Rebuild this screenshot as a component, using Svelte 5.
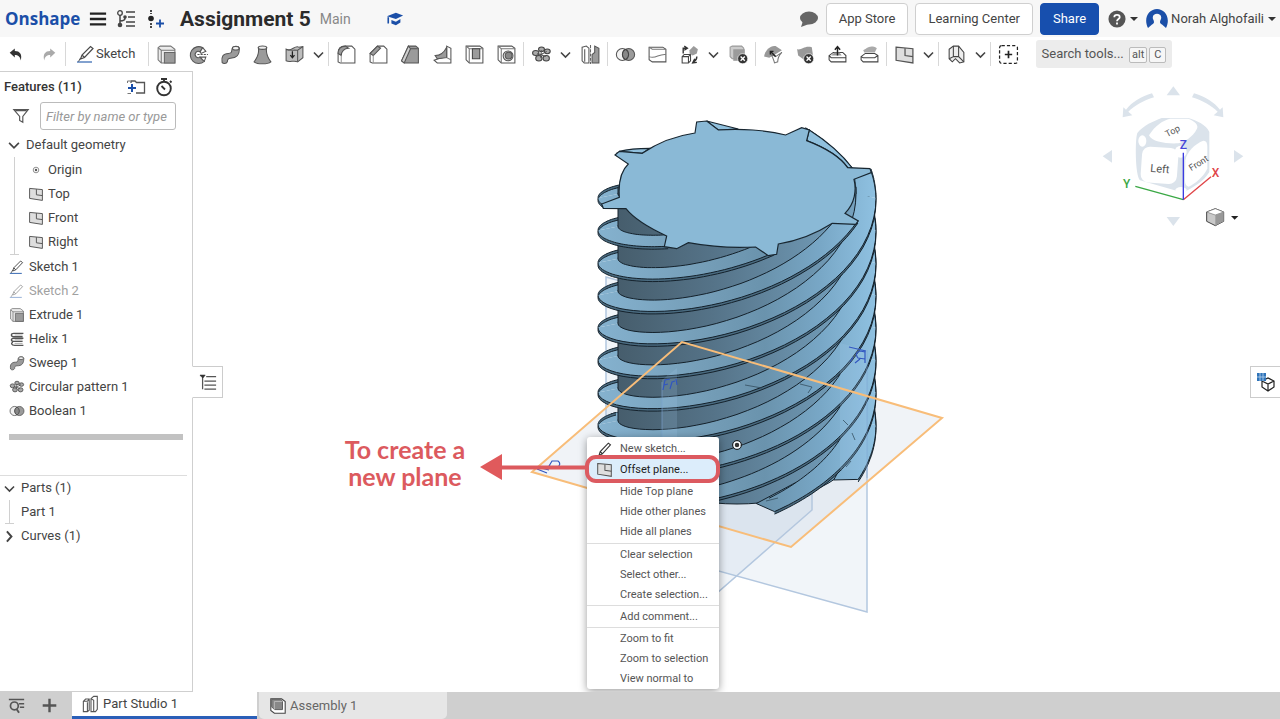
<script>
  const g = '#9b9b9b', d = '#4a4a4a';
  const icons = {
    undo: `<path d="M2 8 L8 3 V6 C14 6 17 10 15 17 C14 12 12 10.500 8 10.500 V13.500 Z" fill="#333"/>`,
    redo: `<path d="M18 8 L12 3 V6 C6 6 3 10 5 17 C6 12 8 10.500 12 10.500 V13.500 Z" fill="#aaa"/>`,
    sketch: `<path d="M4.500 15 L6 11 L14.500 2.500 L17 4.500 L8.500 13.500 Z M6 11 L8.500 13.500" fill="#fff" stroke="${d}" stroke-width="1.200"/><path d="M1 18 H16" stroke="#3f6fb5" stroke-width="1.300"/><path d="M2.500 17.500 L4.500 14" stroke="${d}"/>`,
    pencil: `<path d="M3.500 17 L5 12.500 L14.500 2.500 L17 4.500 L7.500 15 Z M5 12.500 L7.500 15" fill="#fff" stroke="#333" stroke-width="1.300"/>`,
    extrude: `<path d="M2 3.500 L4 2 H14 L18 5 V18 H5 L2 15 Z" fill="#ececec" stroke="#777"/><path d="M5 18 V6 L2 3.500 M5 6 H18" stroke="#777" fill="none"/><path d="M8 8 H18 V18 H8 Z" fill="${g}" stroke="#666"/>`,
    revolve: `<path d="M14 3.500 A8 8 0 1 0 15.500 16.500 L11.500 12.500 A3 3 0 1 1 11.500 7.500 Z" fill="${g}" stroke="#555"/><path d="M14 3.500 L17 7 L12.500 9 L11.500 7.500 Z M11.500 12.500 L17 12.500 L15.500 16.500 Z" fill="#fff" stroke="#555"/><path d="M9 10 H19" stroke="#555" stroke-dasharray="2 1"/>`,
    sweep: `<path d="M2 17.500 C1 12 3 9 8 9 C11 9 11 8 11.500 4.500 C12.500 1.500 17.500 1.500 18.500 4 C18.500 11 16 13.500 10 13.500 C7.500 13.500 7 15 7 17 C6 19 3 19 2 17.500 Z" fill="${g}" stroke="#555"/><ellipse cx="15" cy="4" rx="3.200" ry="1.700" fill="#f3f3f3" stroke="#555"/>`,
    loft: `<path d="M6 3.500 C7 8 5 13 2 17 C5 19.500 15 19.500 18 17 C15 13 13 8 14 3.500 Z" fill="${g}" stroke="#555"/><ellipse cx="10" cy="3.500" rx="4" ry="1.600" fill="#eee" stroke="#555"/>`,
    thicken: `<path d="M2 5 C7 8 10 1 14 3 L18 2.500 V13 L13 17 C9 15 6 18 2 16 Z" fill="#bdbdbd" stroke="#555"/><path d="M2 5 C6 6.500 9 5.500 13 6 L18 2.500 M13 6 V17" fill="none" stroke="#555"/><path d="M8 7 V12 M6 10.500 L8 13 L10 10.500" fill="none" stroke="#222" stroke-width="1.200"/>`,
    fillet: `<path d="M2 17 V9 C2 4 5 2 9 2 H15 L18 5 V18 H4 Z" fill="#fff" stroke="#555"/><path d="M2 9 C2 4 5 2 9 2 L12 4 C8 4 5 7 5 11 Z" fill="${g}" stroke="#555"/><path d="M5 11 V18" stroke="#999"/>`,
    chamfer: `<path d="M2 17 V9 L9 2 H15 L18 5 V18 H4 Z" fill="#fff" stroke="#555"/><path d="M2 9 L9 2 L12 4 L5 11 Z" fill="${g}" stroke="#555"/><path d="M5 11 V18" stroke="#999"/>`,
    draft: `<path d="M8 2 H15 L17.500 4 V18 H4 L1.500 16 Z" fill="${g}" stroke="#555"/><path d="M8 2 L10 4.500 L4 18 L1.500 16 Z" fill="#d0d0d0" stroke="#555"/><path d="M10 4.500 H17" stroke="#555"/>`,
    rib: `<path d="M14 2 L18 4 V18 H5 L2 15.500 L6 14 L14 12 Z" fill="#fff" stroke="#555"/><path d="M14 3 V13 L5 14 L3 11 C9 11 12 7 14 3 Z" fill="${g}" stroke="#555"/><path d="M14 13 L18 15" stroke="#777"/>`,
    shell: `<path d="M2 2 H15 L18 4 V18 H5 L2 15 Z" fill="#fff" stroke="#555"/><path d="M5 4.500 V18 M2 2 L5 4.500 H18" stroke="#777" fill="none"/><path d="M8 4.500 H15 V14 H8 Z" fill="${g}" stroke="#444"/>`,
    hole: `<path d="M2 2 H15 L18 4 V18 H5 L2 15 Z" fill="#fff" stroke="#555"/><path d="M5 4.500 V18 M2 2 L5 4.500 H18" stroke="#777" fill="none"/><circle cx="11.500" cy="11.300" r="4.700" fill="#ddd" stroke="#555"/><circle cx="12" cy="11" r="3.200" fill="#888" stroke="#555"/>`,
    pattern: `<g fill="#aaa" stroke="#444"><ellipse cx="4.500" cy="8.500" rx="3" ry="2.400"/><ellipse cx="10" cy="5" rx="2.800" ry="2.200"/><ellipse cx="15.500" cy="7" rx="2.800" ry="2.200"/><ellipse cx="7.500" cy="13.500" rx="3" ry="2.600"/><ellipse cx="14.500" cy="13.500" rx="3" ry="2.600"/></g><path d="M6 9 L14 12 M10 6 L9 13 M15 7 L8 11" stroke="#555"/>`,
    mirror: `<path d="M2 3 L6 2 L8.500 4 V18 H4 L2 16 Z M4.500 5 V17" fill="#fff" stroke="#555"/><path d="M11.500 18 V10 L14 8 V2 L18 4 V18 Z" fill="${g}" stroke="#555"/><path d="M10 1 V19" stroke="#666" stroke-dasharray="3 1"/>`,
    boolean: `<circle cx="7" cy="10" r="5.700" fill="#f2f2f2" stroke="#555"/><circle cx="13" cy="10" r="5.700" fill="${g}" stroke="#555"/><path d="M10 5 A5.700 5.700 0 0 1 10 15 A5.700 5.700 0 0 1 10 5" fill="#888" stroke="#444"/>`,
    split: `<path d="M2 3 H15 L18 5 V17 H5 L2 15 Z" fill="#fff" stroke="#555"/><path d="M2 3 L5 5 H18 M2 12 C8 15 11 9 18 10" fill="none" stroke="#777"/>`,
    transform: `<path d="M3 12 L5 10 H11 V16 L9 18 H3 Z M3 12 H9 V18 M9 12 L11 10" fill="#fff" stroke="#444"/><path d="M10 6 L14 2 L18 5 L17 9 L13 11 L10 9 Z" fill="${g}"/><path d="M4 9 V4 H7 M5 2 L8 4 L5 6 M17 12 C17 15 16 16 14 17 M15 14 L13 18 L17 17.500" stroke="#333" fill="none" stroke-width="1.300"/>`,
    del: `<path d="M2 3 L4 2 H13 L15 4 V14 H4 L2 12 Z" fill="#ccc" stroke="#999"/><path d="M5 5 H16 V16 H5 Z" fill="${g}"/><circle cx="14" cy="14" r="4.800" fill="#333" stroke="#fff" stroke-width=".6"/><path d="M12 12 L16 16 M16 12 L12 16" stroke="#fff" stroke-width="1.300"/>`,
    face: `<path d="M1 12 C2 5 8 1 12 2 L18 6 L13 9 L6 13 Z" fill="#999"/><path d="M7 9 L12 12 L18 8 C15 11 14 14 14 17 L11 18 C10 15 10 13 7 9" fill="#fff" stroke="#777"/><path d="M12 12 L7 7 M7 10 V7 H10" stroke="#222" fill="none" stroke-width="1.300"/>`,
    delface: `<path d="M2 5 C7 6 9 1 16 3 L17 10 L10 16 L3 11 Z" fill="#999"/><circle cx="13" cy="14" r="4.800" fill="#333" stroke="#fff" stroke-width=".6"/><path d="M11 12 L15 16 M15 12 L11 16" stroke="#fff" stroke-width="1.300"/>`,
    moveface: `<path d="M2 11 L6 8 H15 L18 11 V17 H4 L2 15 Z M2 11 L4 13 H18" fill="#fff" stroke="#444"/><path d="M4 11 H14 L12 8 H7 Z" fill="${g}"/><path d="M10 11 V3 M7.500 5.500 L10 2.500 L12.500 5.500" fill="none" stroke="#222" stroke-width="1.400"/>`,
    replace: `<path d="M4 6 C7 5 10 0 17 4 L15 8 H5 Z" fill="#aaa"/><path d="M2 12 L6 9 H15 L18 11 V17 H4 L2 15 Z M2 12 L4 13 H15 L18 11" fill="#fff" stroke="#444"/>`,
    plane: `<path d="M2 3 L18 4.500 V18 L2 15.500 Z" fill="#dedede" stroke="#555" stroke-width="1.200"/><path d="M10.500 4 V11 L18 12" fill="none" stroke="#555" stroke-width="1.200"/>`,
    frame: `<path d="M3 5 L7 2 H12 L17 8 V17 L13 18 L9 14 L6 17 L3 14 Z" fill="#eee" stroke="#444"/><path d="M7 2 V12 L3 14 M7 12 H12 L17 17 M12 2 V12" fill="none" stroke="#444"/>`,
    addtool: `<rect x="1.500" y="1.500" width="17" height="17" rx="2" fill="none" stroke="#222" stroke-width="1.200" stroke-dasharray="3 2"/><path d="M10 6.500 V13.500 M6.500 10 H13.500" stroke="#222" stroke-width="1.600"/>`,
    helix: `<path d="M18 3 H6 C2 3 2 7 6 7 H17 M18 9 H6 C2 9 2 13 6 13 H17 M5 14 C2 15 3 18 7 18 H18" fill="none" stroke="#555" stroke-width="1.700"/><path d="M17 5 H7 M17 11 H7 M17 15.500 H7" stroke="#999"/>`,
    menu: `<path d="M1 4 H19 M1 10 H19 M1 16 H19" stroke="#222" stroke-width="2.600"/>`,
    tree: `<circle cx="4" cy="4" r="2.300" fill="none" stroke="#444" stroke-width="1.300"/><circle cx="4" cy="16" r="2.300" fill="#444"/><circle cx="9" cy="8" r="1.800" fill="#444"/><path d="M4 6 V14 M4 12 C8 12 9 11 9 9 M10 3 H19 M12 8 H19 M10 13 H19 M10 17 H19" fill="none" stroke="#444" stroke-width="1.500"/>`,
    history: `<path d="M6 1 V5 M6 14 V19" stroke="#333" stroke-width="1.800" stroke-dasharray="2 1"/><circle cx="6" cy="9.500" r="2.800" fill="#222"/><path d="M11 14.500 H19 M15 10.500 V18.500" stroke="#1b4fa8" stroke-width="1.800"/>`,
    cap: `<path d="M1 7 L11 3 L19 6 L11 10 Z M6 11 L11 13 L16 10 V14 L11 17 L6 15 Z" fill="#1b4fa8"/><path d="M2.500 8 V15" stroke="#1b4fa8" stroke-width="1.800"/>`,
    comment: `<ellipse cx="10" cy="9" rx="9" ry="6.500" fill="#666"/><path d="M4 12 L2 18 L10 15 Z" fill="#666"/>`,
    help: `<circle cx="10" cy="10" r="9.500" fill="#555"/><path d="M7 8 C7 4.500 13 4.500 13 8 C13 10 10 10 10 12.500 M10 14 V16" stroke="#fff" stroke-width="2" fill="none"/>`,
    folder: `<path d="M5 6 V4 H9 L10.500 5.500 H18.500 V16 H10" fill="none" stroke="#555" stroke-width="1.300"/><path d="M2 11 H10 M6 7 V15" stroke="#1b4fa8" stroke-width="2"/><path d="M1.500 6 V4 H4 M1.500 16.500 H5" stroke="#777"/>`,
    clock: `<circle cx="10" cy="11.500" r="6.800" fill="#fff" stroke="#333" stroke-width="1.900"/><path d="M7 2 H13 M10 2 V5 M16 4 L17.500 5.500 M7.500 9 L11 12.500" stroke="#333" stroke-width="1.800"/>`,
    filter: `<path d="M2 3 H18 L12 10.500 V17 L8.500 15 V10.500 Z M4 4 H16" fill="#fff" stroke="#555" stroke-width="1.300"/>`,
    origin: `<circle cx="10" cy="10" r="3.500" fill="none" stroke="#777"/><circle cx="10" cy="10" r="1.500" fill="#555"/>`,
    down: `<path d="M3 7 L10 14 L17 7" fill="none" stroke="#444" stroke-width="2.400"/>`,
    right: `<path d="M6 2 L13 10 L6 18" fill="none" stroke="#444" stroke-width="3"/>`,
    list: `<path d="M1 3 H6 L4 5.500 V18 M8 4 H19 M6 9 H19 M6 13.500 H19 M6 18 H19" stroke="#555" fill="none" stroke-width="1.400"/><path d="M1 2 H7 L4 6 Z" fill="#333"/>`,
    cubegrid: `<path d="M6 9 L12 6 L18 9 V15 L12 19 L6 15 Z M6 9 L12 12 L18 9 M12 12 V19" fill="#fff" stroke="#222" stroke-width="1.200"/><rect x="1" y="1" width="9" height="8" fill="#2f73b8"/><path d="M4 1 V9 M7 1 V9 M1 5 H10" stroke="#bcd5ef" stroke-width=".8"/>`,
    find: `<path d="M1 3 H19 M13 8 H19 M14 12 H19" stroke="#555" stroke-width="1.800"/><circle cx="7.500" cy="10.500" r="4.600" fill="none" stroke="#555" stroke-width="2"/><path d="M10 14 L13 18.500" stroke="#555" stroke-width="2.200"/>`,
    plus: `<path d="M10 2 V18 M2 10 H18" stroke="#555" stroke-width="2.800"/>`,
    studio: `<path d="M1.500 7 L4 4.500 H8 V17 L6 18.500 H1.500 Z M6 8 V18 M1.500 7 H6 L8 4.500" fill="#fff" stroke="#555" stroke-width="1.200"/><path d="M10 4 L13 1.500 H17 V16 L15 18.500 H10 Z M10 4 L13 6 V18" fill="#fff" stroke="#555" stroke-width="1.200"/>`,
    assembly: `<path d="M2 2 H14 L18 5 V18 H6 L2 15 Z" fill="#fff" stroke="#444" stroke-width="1.200"/><path d="M3 2.500 H13 L15 4.500 V14 H6 L3 11 Z" fill="#888" stroke="#555"/><path d="M6 5 H15 M6 5 V14" stroke="#bbb"/>`
  };

  const toolGroups = [
    [['extrude', 'Extrude'], ['revolve', 'Revolve'], ['sweep', 'Sweep'], ['loft', 'Loft'], ['thicken', 'Thicken'], ['down', 'More solids']],
    [['fillet', 'Fillet'], ['chamfer', 'Chamfer'], ['draft', 'Draft'], ['rib', 'Rib'], ['shell', 'Shell'], ['hole', 'Hole']],
    [['pattern', 'Circular pattern'], ['down', 'More patterns'], ['mirror', 'Mirror']],
    [['boolean', 'Boolean'], ['split', 'Split'], ['transform', 'Transform'], ['down', 'More transforms'], ['del', 'Delete part']],
    [['face', 'Modify fillet'], ['delface', 'Delete face'], ['moveface', 'Move face'], ['replace', 'Replace face']],
    [['plane', 'Plane'], ['down', 'More planes']],
    [['frame', 'Frame'], ['down', 'More frames']],
    [['addtool', 'Add custom features']]
  ];
  const geometry = [['origin', 'Origin'], ['plane', 'Top'], ['plane', 'Front'], ['plane', 'Right']];
  const features = [
    ['sketch', 'Sketch 1'], ['sketch', 'Sketch 2', true], ['extrude', 'Extrude 1'], ['helix', 'Helix 1'],
    ['sweep', 'Sweep 1'], ['pattern', 'Circular pattern 1'], ['boolean', 'Boolean 1']
  ];
  const menu = [
    [['New sketch...', 'pencil'], ['Offset plane...', 'plane'], ['Hide Top plane'], ['Hide other planes'], ['Hide all planes']],
    [['Clear selection'], ['Select other...'], ['Create selection...']],
    [['Add comment...']],
    [['Zoom to fit'], ['Zoom to selection'], ['View normal to']]
  ];

  // Eight-start thread, projected: an angle runs from the right rim (0) over the front to the left rim (PI).
  const CX = 737, TOP = 187, BOTTOM = 446, RISE = 259 / (2 * Math.PI), TILT = 0.49;
  const OUTER = 139, INNER = 119, PI = Math.PI;
  function point(r, y0, a, dy = 0) {
    return `${(CX + r * Math.cos(a)).toFixed(1)},${(y0 + dy + r * TILT * Math.sin(a) - RISE * (PI - a)).toFixed(1)}`;
  }
  function curve(r, y0, from, to, dy = 0) {
    return Array.from({ length: 37 }, (_, i) => point(r, y0, from + ((to - from) * i) / 36, dy));
  }
  function segment(y0, lo, hi) {
    const end = Math.max(lo, PI - (y0 - TOP) / RISE);
    const foot = PI - (y0 - BOTTOM) / RISE;
    const start = Math.min(hi, foot);
    if (start <= end) return null;
    const out = curve(OUTER, y0, start, end);
    const inner = curve(INNER, y0, end, start, -4);
    const low = curve(OUTER, y0, end, start, 2.5);
    const footInner = [CX + INNER * Math.cos(foot + 0.11), BOTTOM + INNER * TILT * Math.sin(foot + 0.11)].join(',');
    return {
      face: 'M' + out.concat(inner).join(' ') + 'Z',
      rim: 'M' + out.concat(low).join(' ') + 'Z',
      outer: 'M' + out.join(' '),
      inner: 'M' + inner.join(' '),
      low: 'M' + low.join(' '),
      foot: foot < hi && foot > lo ? `M${point(OUTER, y0, foot)} ${footInner} ${point(INNER, y0, foot - 0.25, -4)} ${point(OUTER, y0, foot - 0.08)}Z` : ''
    };
  }
  const starts = Array.from({ length: 17 }, (_, i) => 198 + 32.4 * (15 - i));
  const back = starts.flatMap((y) => [segment(y, PI, PI + 1), segment(y, -1.3, 0)]).filter(Boolean);
  const front = starts.map((y) => segment(y, 0, PI)).filter(Boolean);
</script>

{#snippet icon(name, size = 20)}
  <svg class="icon" width={size} height={size} viewBox="0 0 20 20" fill="none" aria-hidden="true">{@html icons[name]}</svg>
{/snippet}

{#snippet thread(t)}
  {#if t.foot}<path d={t.foot} fill="url(#flank)" stroke="#14212b" />{/if}
  <path d={t.face} fill="url(#flank)" />
  <path d={t.rim} fill="#4a6b80" />
  <path d={t.outer} class="edge" />
  <path d={t.inner} class="edge" />
  <path d={t.low} class="edge" />
{/snippet}

<div class="app">
  <header>
    <a class="logo" href="#home">Onshape</a>
    <button class="bare" aria-label="Menu">{@render icon('menu', 18)}</button>
    <button class="bare" aria-label="Versions">{@render icon('tree')}</button>
    <button class="bare" aria-label="Create version">{@render icon('history')}</button>
    <h1>Assignment 5</h1>
    <span class="branch">Main</span>
    <button class="bare learn" aria-label="Education">{@render icon('cap', 18)}</button>
    <div class="right">
      <button class="bare" aria-label="Comments">{@render icon('comment')}</button>
      <button class="box">App Store</button>
      <button class="box">Learning Center</button>
      <button class="box share">Share</button>
      <button class="bare drop" aria-label="Help">{@render icon('help', 18)}<i class="caret"></i></button>
      <button class="bare user">
        <svg width="24" height="22" viewBox="0 0 24 22" aria-hidden="true"><path d="M3 20 C-2 10 4 1 12 1 C20 1 26 10 21 20 L17 16.500 C14 15 15 13 16 11 C18 4 6 4 8 11 C9 13 10 15 7 16.500 Z" fill="#1b4fa8" /></svg>
        Norah Alghofaili<i class="caret"></i>
      </button>
    </div>
  </header>

  <nav class="toolbar" aria-label="Tools">
    <button class="tool" aria-label="Undo">{@render icon('undo', 17)}</button>
    <button class="tool" aria-label="Redo">{@render icon('redo', 17)}</button>
    <i class="sep"></i>
    <button class="bare sketch">{@render icon('sketch')}Sketch</button>
    {#each toolGroups as group}
      <i class="sep"></i>
      {#each group as [name, label]}
        <button class="tool" class:more={name === 'down'} aria-label={label}>{@render icon(name, name === 'down' ? 13 : 21)}</button>
      {/each}
    {/each}
    <button class="search">Search tools... <kbd>alt</kbd><kbd>C</kbd></button>
  </nav>

  <main>
    <aside>
      <div class="panel-head">
        <h2>Features (11)</h2>
        <button class="bare" aria-label="Add folder">{@render icon('folder')}</button>
        <button class="bare" aria-label="Regeneration times">{@render icon('clock')}</button>
      </div>
      <div class="filter">
        <label for="filter" aria-label="Filter">{@render icon('filter', 18)}</label>
        <input id="filter" type="text" placeholder="Filter by name or type" />
      </div>
      <button class="row group">{@render icon('down', 14)}Default geometry</button>
      <ul class="branchline geometry">
        {#each geometry as [name, label]}
          <li class="row">{@render icon(name, 16)}{label}</li>
        {/each}
      </ul>
      <ul>
        {#each features as [name, label, hidden]}
          <li class="row feature" class:hidden>{@render icon(name, 16)}{label}</li>
        {/each}
      </ul>
      <div class="rollback"></div>
      <section class="parts">
        <button class="row part-group">{@render icon('down', 13)}Parts (1)</button>
        <ul class="branchline part"><li class="row">Part 1</li></ul>
        <button class="row part-group">{@render icon('right', 13)}Curves (1)</button>
      </section>
    </aside>

    <div class="canvas">
      <svg class="scene" viewBox="193 72 1087 620" preserveAspectRatio="xMinYMin meet" aria-label="Threaded part">
        <defs>
          <linearGradient id="flank" gradientUnits="userSpaceOnUse" x1="598" y1="0" x2="876" y2="0">
            <stop offset="0" stop-color="#85b2cf" /><stop offset=".35" stop-color="#769fb9" />
            <stop offset=".6" stop-color="#6a93ad" /><stop offset=".8" stop-color="#78a7c6" /><stop offset="1" stop-color="#8fc1e1" />
          </linearGradient>
          <linearGradient id="core" gradientUnits="userSpaceOnUse" x1="617" y1="0" x2="857" y2="0">
            <stop offset="0" stop-color="#465d6c" /><stop offset=".4" stop-color="#557388" /><stop offset="1" stop-color="#76a2bf" />
          </linearGradient>
        </defs>
        <g fill="#a9c0dc" fill-opacity=".16" stroke="#b3c7df" stroke-width="1.500">
          <path d="M606 277 L867 350 V612 L606 540 Z" />
          <path d="M662 380 L812 250 V510 L662 641 Z" />
        </g>
        <path d="M532 472 L682 342 L942 418 L791 547 Z" fill="#b9c9dc" fill-opacity=".22" />
        {#each back as t}{@render thread(t)}{/each}
        <path d="M618 187 V446 A119 58 0 0 0 856 446 V187 Z" fill="url(#core)" stroke="#16232d" />
        {#each front as t}{@render thread(t)}{/each}
        <g transform="translate(580 100) scale(.3333)" stroke="#182630" stroke-width="3.500">
          <path d="M688 90 C735 120 780 155 817 204 L803 203 C780 170 740 145 680 122 Z M380 63 L475 87 L415 90 Z M118 154 C145 147 175 145 210 145 L187 160 Z" fill="#90c0dd" />
          <path d="M345 99 L350 66 L380 63 L415 90 C480 85 560 90 617 105 L665 83 L688 90 L680 122 C740 145 780 170 803 203 L870 206 L874 218 L822 238 C830 270 825 310 795 340 L835 363 L827 373 L757 370 C710 400 660 422 595 432 L590 463 L565 467 L527 441 C460 445 390 440 325 428 L290 446 L253 440 L260 408 C210 385 165 360 138 326 L70 325 L65 312 L118 292 C115 250 120 215 145 192 L105 165 L118 154 L187 160 C230 130 290 107 345 99 Z" fill="#8ab9d6" />
        </g>
        <path d="M662 380 L677 368 V446 H662 Z M840 343 L867 350 V470 H840 Z" fill="#a9cdf0" fill-opacity=".18" />
        <path d="M662 382 V440 M867 350 V478" stroke="#7ba4d4" stroke-opacity=".6" />
        <path d="M745 385 L762 388 M800 384 L812 387 L808 393 M843 420 L848 425 M852 433 L855 440 M846 467 L851 461 M766 501 L778 498" fill="none" stroke="#2c4554" stroke-opacity=".7" />
        <g stroke="#3156c0" stroke-width="1.200" fill="none">
          <path d="M663 390 L665 380 L670 379 M664 385 L668 384 M670 389 L672 382 L675 381 M676 379 L677 385 M849 347 L866 351 M865 363 V352 L860 351 Q854 353 858 358 L865 359 M860 359 L855 363 M853 357 L850 362" />
          <path d="M537 469 L547 473 M541 468 L549 470 M549 466 L557 468 Q562 464 558 461 L552 461 Z" />
        </g>
        <path d="M532 472 L682 342 L942 418 L791 547 Z" fill="none" stroke="#f8bd79" stroke-width="2" />
        <circle cx="737" cy="445" r="3" fill="#333" stroke="#fff" stroke-width="1.500" /><circle cx="737" cy="445" r="4.500" fill="none" stroke="#222" />
      </svg>

      <svg class="cube" width="200" height="170" viewBox="0 0 600 510" aria-label="View cube">
        <g fill="#dbe3eb">
          <path d="M280 43 L300 70 H260 Z M280 462 L300 435 H260 Z M68 253 L96 234 V272 Z M490 253 L462 234 V272 Z" />
          <path d="M216 64 L222 76 C190 86 162 102 145 119 L157 130 L128 136 L130 106 L138 113 C155 91 185 73 216 64 Z M342 64 L336 76 C368 86 396 102 413 119 L401 130 L430 136 L428 106 L420 113 C403 91 373 73 342 64 Z" />
          <path d="M172 183 C190 160 220 148 245 138 H325 C350 145 380 160 388 180 V300 C370 330 340 345 310 362 L180 325 C165 310 165 200 172 183 Z" />
        </g>
        <g fill="#fff">
          <path d="M207 190 C225 160 250 145 270 140 H325 C345 148 358 160 350 172 C340 195 310 212 295 214 C260 216 215 210 207 190 Z" />
          <rect x="184" y="226" width="109" height="108" rx="24" transform="rotate(4 238 280)" />
          <path d="M316 265 C320 240 345 215 370 206 Q382 205 382 225 V290 C370 315 345 335 326 344 Q315 343 315 325 Z" />
          <ellipse cx="187" cy="207" rx="12" ry="17" /><circle cx="302" cy="239" r="18" /><ellipse cx="303" cy="354" rx="17" ry="9" />
        </g>
        <g class="cube-text">
          <text x="210" y="299" transform="rotate(5 210 299)">Left</text>
          <text class="small" x="334" y="298" transform="rotate(-32 334 298)">Front</text>
          <text class="small" x="262" y="196" transform="rotate(-28 262 196)">Top</text>
        </g>
        <path d="M310 383 L166 343" stroke="#3aa845" stroke-width="4" /><path d="M310 383 L393 314" stroke="#df4548" stroke-width="4" /><path d="M310 383 V242" stroke="#3b3be0" stroke-width="4" />
        <g class="axis"><text x="299" y="232" fill="#4646d8">Z</text><text x="395" y="314" fill="#df4548">X</text><text x="129" y="348" fill="#3aa845">Y</text></g>
        <path d="M380 420 L406 410 L431 420 V448 L406 461 L380 448 Z" fill="#c9c9c9" stroke="#444" stroke-width="3" /><path d="M380 420 L406 429 L431 420 L406 410 Z" fill="#fff" stroke="#777" stroke-width="2" /><path d="M406 429 L431 420 V448 L406 461 Z" fill="#999" /><path d="M453 432 H475 L464 443 Z" fill="#222" />
      </svg>

      <button class="edge-tab left" aria-label="Toggle feature list">{@render icon('list', 18)}</button>
      <button class="edge-tab far" aria-label="Appearance panel">{@render icon('cubegrid')}</button>

      <div class="menu" role="menu">
        {#each menu as section}
          <div class="section">
            {#each section as [label, glyph]}
              <button role="menuitem" class:active={glyph === 'plane'}>
                <span class="slot">{#if glyph}{@render icon(glyph, 17)}{/if}</span>{label}
              </button>
            {/each}
          </div>
        {/each}
      </div>

      <p class="note">To create a<br />new plane</p>
      <svg class="arrow" width="110" height="28" viewBox="0 0 110 28" aria-hidden="true"><path d="M0 14 L22 1 V27 Z" fill="#e05a5c" /><path d="M20 14.500 H107" stroke="#dc5a5e" stroke-width="4" /></svg>
      <div class="ring"></div>
    </div>
  </main>

  <footer>
    <button class="bare find" aria-label="Search tabs">{@render icon('find', 17)}</button>
    <button class="bare add" aria-label="Add tab">{@render icon('plus', 17)}</button>
    <button class="tab current">{@render icon('studio', 18)}Part Studio 1</button>
    <button class="tab">{@render icon('assembly', 18)}Assembly 1</button>
  </footer>
</div>

<style>
  :global(body) { margin: 0; }
  .app { display: flex; flex-direction: column; height: 100vh; overflow: hidden; background: #fff; color: #444; font: 13px/16px Roboto, sans-serif; }
  .app * { box-sizing: border-box; }
  button { font: inherit; color: inherit; margin: 0; padding: 0; border: 0; background: none; white-space: nowrap; }
  h1, h2, p, ul { margin: 0; padding: 0; }
  ul { list-style: none; }
  .icon { display: block; flex: none; }
  .bare { display: flex; align-items: center; }
  .caret { border: 4px solid transparent; border-top-color: #333; border-bottom: 0; margin-left: 4px; }

  header { flex: none; display: flex; align-items: center; height: 37px; padding: 0 4px 0 5px; background: #f7f7f7; gap: 9px; }
  .logo { width: 75px; color: #1b4fa8; font: 700 17px/24px "Open Sans", sans-serif; text-decoration: none; }
  h1 { font: 700 21px/26px Roboto, sans-serif; color: #2b2b2b; margin-left: 6px; white-space: nowrap; }
  .branch { font-size: 14px; color: #888; }
  .learn { margin-left: 26px; }
  .right { display: flex; align-items: center; margin-left: auto; gap: 7px; }
  .box { height: 32px; padding: 0 12px; border: 1px solid #cfcfcf; border-radius: 4px; background: #fff; }
  .share { background: #174fae; border-color: #174fae; color: #fff; }
  .drop { margin-left: 2px; }
  .user svg { margin-right: 2px; }

  .toolbar { flex: none; display: flex; align-items: center; height: 34px; }
  .tool { display: flex; flex: none; justify-content: center; width: 32px; }
  .more { width: 17px; }
  .sep { flex: none; width: 1px; height: 24px; margin: 0 1px; background: #d8d8d8; }
  .sketch { flex: none; width: 80px; padding-left: 9px; }
  .search { flex: none; height: 28px; width: 136px; margin-left: 12px; background: #ececec; border-radius: 3px; color: #555; }
  kbd { display: inline-block; margin-left: 2px; padding: 0 2px; border: 1px solid #bbb; border-radius: 2px; background: #f6f6f6; font: 11px/14px Roboto, sans-serif; }
  kbd + kbd { padding: 0 4px; }

  main { display: flex; flex: 1; min-height: 0; }
  aside { flex: none; width: 193px; border: solid #cfcfcf; border-width: 1px 1px 1px 0; }
  .panel-head { display: flex; align-items: center; gap: 8px; height: 30px; padding: 0 18px 0 4px; }
  h2 { flex: 1; font: 500 13px/16px Roboto, sans-serif; color: #333; }
  .filter { display: flex; align-items: center; justify-content: space-between; height: 28px; margin-bottom: 3px; padding: 0 16px 0 12px; }
  .filter input { width: 136px; height: 28px; padding: 0 5px; border: 1px solid #bbb; border-radius: 3px; font: italic 13px/16px Roboto, sans-serif; }
  .filter input::placeholder { color: #999; }
  .row { display: flex; align-items: center; height: 24px; }
  .group { padding-left: 7px; gap: 5px; }
  .branchline { position: relative; }
  .branchline::before { content: ""; position: absolute; top: 0; bottom: 0; width: 1px; background: #d0d0d0; }
  .branchline::after { content: ""; position: absolute; bottom: 0; width: 9px; height: 1px; background: #d0d0d0; }
  .geometry { padding: 1px 0 1px 28px; }
  .geometry::before { left: 14px; }
  .geometry::after { left: 10px; }
  .geometry .row { gap: 4px; }
  .feature { padding-left: 9px; gap: 4px; }
  .hidden { opacity: .5; }
  .rollback { height: 6px; margin: 11px 9px 35px; background: #c2c2c2; }
  .parts { margin-right: 5px; border-top: 1px solid #ddd; }
  .part-group { padding-left: 3px; gap: 5px; }
  .part { padding-left: 21px; }
  .part::before { left: 9px; }
  .part::after { left: 5px; }

  .canvas { position: relative; flex: 1; min-width: 0; overflow: visible; }
  .scene { position: absolute; inset: 1px 0 0; width: 100%; height: 100%; }
  .edge { fill: none; stroke: #14212b; stroke-width: 1; }
  .cube { position: absolute; top: 1px; right: 0; }
  .cube-text { font: 33px Roboto, sans-serif; fill: #555; }
  .small { font-size: 27px; }
  .axis { font: 500 36px Roboto, sans-serif; }
  .edge-tab { position: absolute; top: 295px; display: grid; place-items: center; width: 31px; height: 32px; border: 1px solid #ccc; background: #fff; }
  .left { left: -1px; border-left-color: #fff; }
  .far { right: -1px; }

  .menu { position: absolute; left: 394px; top: 366px; width: 132px; padding-top: 1px; background: #fff; border-radius: 3px; box-shadow: 0 2px 8px #0006; font-size: 11px; color: #555; }
  .section { padding: 1px 0; }
  .section + .section { border-top: 1px solid #ddd; padding-bottom: 0; }
  .menu button { display: flex; align-items: center; width: 100%; height: 20px; }
  .slot { width: 33px; padding-left: 9px; }
  .menu .active { height: 21px; margin-bottom: 2px; background: #dcedfb; color: #222; }
  .note { position: absolute; left: 132px; top: 365px; width: 160px; color: #dc5a5e; text-align: center; font: 700 25px/27px Lato, sans-serif; }
  .arrow { position: absolute; left: 287px; top: 382px; }
  .ring { position: absolute; left: 392px; top: 384px; width: 135px; height: 28px; border: 4px solid #dc5a60; border-radius: 11px; }

  footer { position: relative; flex: none; display: flex; height: 27px; background: #cfcfcf; }
  .find { padding-left: 8px; width: 41px; }
  .add { width: 31px; }
  .tab { display: flex; align-items: center; gap: 3px; width: 188px; padding-left: 10px; border-radius: 0 0 5px 5px; background: #e6e6e6; color: #666; }
  .current { width: 185px; margin-right: 2px; border-bottom: 3px solid #2a5fb8; border-radius: 0; background: #fff; color: #444; }
</style>
